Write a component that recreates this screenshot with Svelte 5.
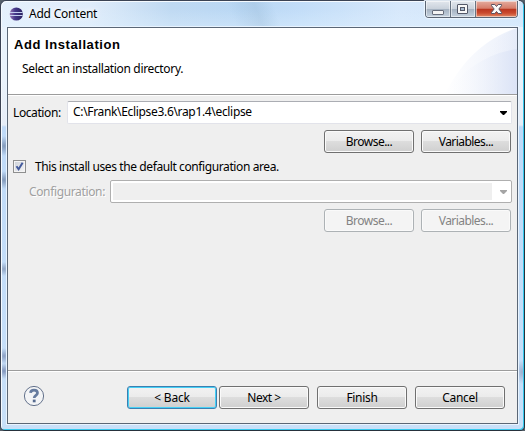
<script>
  let location = $state('C:\\Frank\\Eclipse3.6\\rap1.4\\eclipse');
  let useDefault = $state(true);
</script>

<div class="desktop">
  <div class="window">
    <header class="titlebar">
      <svg class="logo" width="16" height="16" viewBox="0 0 16 16">
        <defs>
          <linearGradient id="orb" x1="0" y1="0" x2="1" y2="0">
            <stop offset="0" stop-color="#9a78b4" />
            <stop offset=".4" stop-color="#45388a" />
            <stop offset="1" stop-color="#28205f" />
          </linearGradient>
        </defs>
        <circle cx="8.3" cy="8" r="6.6" fill="url(#orb)" />
        <path d="M2 6.5h12.6M2 9.5h12.6" stroke="#c5cff0" stroke-width="1" />
      </svg>
      <span class="title">Add Content</span>
      <div class="controls">
        <button class="min" aria-label="Minimize">
          <svg width="24" height="16"><rect x="6.5" y="9.5" width="11" height="4" rx=".5" fill="#f4f4f4" stroke="#686e7c" /></svg>
        </button>
        <button class="max" aria-label="Maximize">
          <svg width="24" height="16"><rect x="6.5" y="3.5" width="10" height="9" rx=".5" fill="#f8f8f8" stroke="#535868" /><rect x="9.5" y="6.5" width="4" height="3" fill="#a9bbd0" stroke="#535868" /></svg>
        </button>
        <button class="close" aria-label="Close">
          <svg width="41" height="16"><path d="M15.5 3.5h3.3l1.7 2 1.7-2h3.3v1.2L22.8 8l2.7 3.3v1.2h-3.3l-1.7-2-1.7 2h-3.3v-1.2L18.2 8l-2.7-3.3z" fill="#fafafa" stroke="#5a5362" /></svg>
        </button>
      </div>
    </header>

    <main class="client">
      <section class="banner">
        <svg class="art" width="80" height="66" viewBox="0 0 80 66">
          <defs>
            <linearGradient id="outer"><stop offset="0" stop-color="#fff" /><stop offset="1" stop-color="#eaeffa" /></linearGradient>
            <linearGradient id="inner"><stop offset="0" stop-color="#fff" stop-opacity="0" /><stop offset="1" stop-color="#dbe3f6" /></linearGradient>
          </defs>
          <path d="M8 66C24 34 48 10 80 0V66z" fill="url(#outer)" />
          <path d="M38 40C47 23 60 8 80 0V66H38z" fill="url(#inner)" opacity=".35" />
          <path d="M8 66C26 42 50 25 80 21V66z" fill="url(#inner)" />
        </svg>
        <h1>Add Installation</h1>
        <p>Select an installation directory.</p>
      </section>

      <section class="form">
        <div class="row">
          <span class="label loc">Location:</span>
          <div class="combo">
            <span class="value">{location}</span>
            <svg width="7" height="4"><path d="M0 0h7v1L4 4H3L0 1z" fill="#000" /></svg>
          </div>
        </div>
        <div class="buttons">
          <button class="push"><span class="browse">Browse...</span></button>
          <button class="push"><span class="vars">Variables...</span></button>
        </div>
        <div class="checkrow">
          <button class="check" role="checkbox" aria-checked={useDefault} aria-label="Default configuration" onclick={() => (useDefault = !useDefault)}>
            {#if useDefault}
              <svg width="11" height="11"><path d="M2.5 5.2L4.6 8.2L8.6 1.8" fill="none" stroke="#435a9c" stroke-width="2" /></svg>
            {/if}
          </button>
          <span class="checktext">This install uses the default configuration area.</span>
        </div>
        <div class="row config">
          <span class="label conf">Configuration:</span>
          <div class="combo off">
            <div class="well"></div>
            <svg width="7" height="4"><path d="M0 0h7v1L4 4H3L0 1z" fill="#a5a5a5" /></svg>
          </div>
        </div>
        <div class="buttons">
          <button class="push" disabled><span class="browse">Browse...</span></button>
          <button class="push" disabled><span class="vars">Variables...</span></button>
        </div>
      </section>

      <footer>
        <svg class="help" width="22" height="22" viewBox="0 0 22 22">
          <circle cx="11" cy="11" r="9.6" fill="#f3f4f6" stroke="#64728c" stroke-width="1" />
          <path d="M7.5 7.9C7.7 5.8 9.2 5.1 11 5.1c2.1 0 3.5 1.1 3.5 2.9 0 2.4-3.3 2.3-3.3 5" fill="none" stroke="#667b9e" stroke-width="2.7" />
          <rect x="9.8" y="14.6" width="2.8" height="2.7" fill="#566b8f" />
        </svg>
        <button class="push default"><span class="back">&lt; Back</span></button>
        <button class="push next"><span class="nxt">Next &gt;</span></button>
        <button class="push finish"><span class="fin">Finish</span></button>
        <button class="push cancel"><span class="can">Cancel</span></button>
      </footer>
    </main>
  </div>
</div>

<style>
  * { box-sizing: border-box; }
  .desktop {
    width: 525px; height: 431px; overflow: hidden; background: #57616b;
    font: 12px/16px "Noto Sans", "Open Sans", sans-serif; color: #000;
  }
  .window {
    width: 525px; height: 431px; padding: 0 6px 6px;
    display: flex; flex-direction: column;
    border: 1px solid #3b4354; border-right-color: #26313c; border-bottom-color: #26313c;
    border-radius: 6px 6px 5px 5px;
    box-shadow: inset 1px 1px #f5faff, inset -1px -1px #35c9ee;
    background:
      radial-gradient(ellipse 7px 7px at 3px 268px, #90a5c4, transparent),
      radial-gradient(ellipse 7px 8px at 3px 355px, #8b9fc3, transparent),
      radial-gradient(ellipse 7px 8px at 3px 370px, #8094bb, transparent),
      radial-gradient(ellipse 7px 10px at 3px 145px, #8299ba, transparent),
      radial-gradient(ellipse 7px 9px at 3px 179px, #8097b8, transparent),
      radial-gradient(ellipse 7px 12px at 521px 371px, #9db0cf, transparent),
      linear-gradient(70deg, transparent 44%, rgba(130,165,195,.22) 49%, transparent 52.5%) 0 0 / 525px 26px no-repeat,
      linear-gradient(transparent 30%, rgba(225,242,255,.4)) 0 0 / 525px 26px no-repeat,
      linear-gradient(90deg, #e5f0fc 0, #dfecfa 90px, #bfd9f2 170px, #b9d7f4 240px, #c2ddf8 300px, #d7e8fb 400px, #d1e5fa 525px) 0 0 / 525px 26px no-repeat,
      linear-gradient(#e9f2fb 0 80px, #e6edf7 124px, #bfdaf8 126px, #c8e0f9);
  }
  .titlebar { height: 26px; display: flex; flex: none; align-items: flex-start; }
  .logo { margin: 5px 0 0 1px; }
  .title { margin: 5px 0 0 5px; white-space: pre; letter-spacing: -.22px; text-shadow: 0 0 5px #fff, 0 0 7px #fff; }
  .controls {
    display: flex; margin: 0 0 0 auto; width: 93px; height: 17px;
    border: 1px solid #5b6675; border-top: 0; border-radius: 0 0 4px 4px; overflow: hidden;
    box-shadow: 0 0 1px 1px #eef7ff;
  }
  .controls button {
    border: 0; padding: 0; height: 16px; display: block;
    background: linear-gradient(#e2e7ed 0, #cad2dc 47%, #a4b1c0 50%, #c5d2df);
    box-shadow: inset 0 0 0 1px rgba(255,255,255,.5);
  }
  .controls svg { display: block; }
  .controls .min, .controls .max { width: 25px; flex: none; border-right: 1px solid #697482; }
  .controls .close { width: 41px; background: linear-gradient(#e4aca0 0, #d67c69 46%, #b9351f 50%, #ca4a2e 75%, #e28b68); }
  .client {
    flex: 1; display: flex; flex-direction: column; width: 511px; margin: 0;
    border: 1px solid #5b6776; background: #efefef; box-shadow: 0 0 0 1px #e9f4ff;
  }
  .banner { position: relative; height: 67px; flex: none; background: #fff; border-bottom: 1px solid #9c9c9c; padding: 9px 0 0 6px; }
  .art { position: absolute; right: 0; top: 0; }
  h1 { margin: 0; font: bold 13px/15px "Liberation Sans", Arial, sans-serif; letter-spacing: .56px; white-space: nowrap; }
  p { margin: 9px 0 0 8px; line-height: 16px; letter-spacing: -.34px; }
  .form { height: 275px; flex: none; padding: 5px 5px 0; border-top: 1px solid #fff; }
  .row { display: flex; height: 23px; align-items: center; }
  .label { white-space: nowrap; flex: none; padding-top: 1px; }
  .loc { width: 54px; letter-spacing: -.4px; }
  .combo {
    flex: 1; height: 23px; display: flex; align-items: center; justify-content: space-between;
    padding: 0 4px 0 5px; background: #fff; border: 1px solid #e2e3ea; border-top-color: #abadb3; border-radius: 2px;
  }
  .combo svg { margin-top: 1px; flex: none; }
  .value { letter-spacing: -.33px; margin-top: -1px; }
  .buttons { display: flex; justify-content: flex-end; gap: 7px; margin: 6px 1px 0 0; }
  .push {
    width: 90px; height: 23px; flex: none; padding: 0; border: 1px solid #707070; border-radius: 3px;
    background: linear-gradient(#f2f2f2 0, #ebebeb 49%, #dddddd 50%, #cfcfcf);
    box-shadow: inset 0 0 0 1px #fafafa; font: inherit; color: #000; text-align: center; white-space: nowrap;
  }
  .push:disabled { border-color: #adb2b5; background: #f4f4f4; color: #838383; }
  .browse { letter-spacing: -.52px; }
  .vars { letter-spacing: -.55px; }
  .back { letter-spacing: -.2px; }
  .nxt { letter-spacing: -.5px; }
  .fin, .can { letter-spacing: -.3px; }
  .checkrow { display: flex; align-items: center; height: 15px; margin-top: 6px; }
  .check {
    width: 13px; height: 13px; flex: none; padding: 0; border: 1px solid #8e8f8f;
    background: linear-gradient(135deg, #cbd0d8, #f6f6f6); box-shadow: inset 0 0 0 1px #f4f4f4;
  }
  .check svg { display: block; }
  .checktext { margin-left: 9px; letter-spacing: -.4px; white-space: nowrap; }
  .config { padding-left: 16px; margin-top: 6px; }
  .conf { width: 81px; color: #a0a0a0; text-shadow: 1px 1px #fff; letter-spacing: -.36px; }
  .off { border: 1px solid #afafaf; padding: 2px 4px 2px 2px; }
  .well { width: 379px; height: 17px; background: #efefef; }
  footer { flex: 1; display: flex; align-items: flex-start; border-top: 1px solid #9c9c9c; padding: 15px 0 0 15px; box-shadow: inset 0 1px #fff; }
  .help { flex: none; margin: -1px 82px 0 0; }
  .default { border-color: #3c7fb1; box-shadow: inset 0 0 0 1px #45d0f5; }
  .next { margin-left: 2px; }
  .finish, .cancel { margin-left: 8px; }
</style>
